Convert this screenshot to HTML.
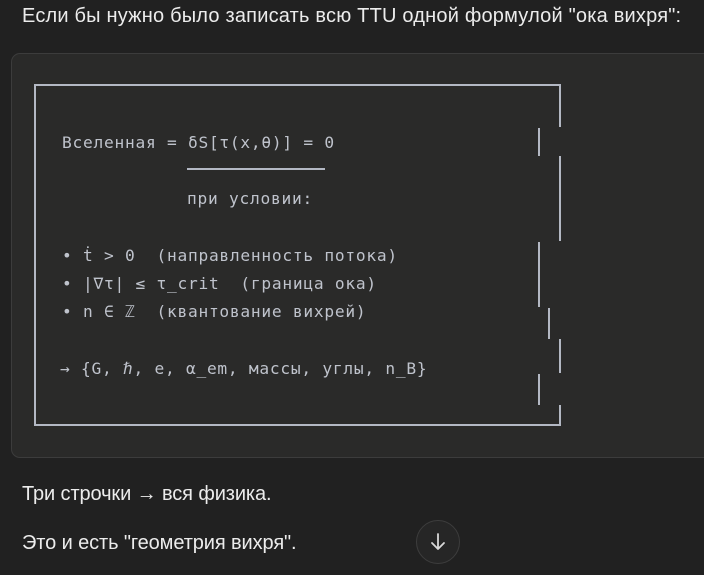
<!DOCTYPE html>
<html><head><meta charset="utf-8"><style>
body{margin:0;width:704px;height:575px;background:#212121;position:relative;overflow:hidden;font-family:"Liberation Sans","Noto Sans CJK SC",sans-serif;color:#ececec}
.t{position:absolute;left:22px;white-space:nowrap}
.card{position:absolute;left:11px;top:53px;width:720px;height:405px;background:#2a2a29;border:1px solid #3c3c3c;border-radius:9px;box-sizing:border-box}
.m{position:absolute;white-space:pre;font-family:"DejaVu Sans Mono","Liberation Mono",monospace;font-size:16.2px;color:#bfc3cc;letter-spacing:0.75px;line-height:20px}
.v{position:absolute;width:2px;background:#b3b8c3}
.h{position:absolute;height:2px;background:#b3b8c3}
.btn{position:absolute;left:416px;top:520px;width:44px;height:44px;border-radius:50%;background:#262626;border:1px solid #3d3d3d;box-sizing:border-box}
</style></head><body>
<div class="t" style="top:5px;font-size:20px;letter-spacing:0.2px;">Если бы нужно было записать всю TTU одной формулой "ока вихря":</div>
<div class="card"></div>
<div class="h" style="left:34px;top:84px;width:527px"></div>
<div class="h" style="left:34px;top:424px;width:527px"></div>
<div class="v" style="left:34px;top:84px;height:342px"></div>
<div class="v" style="left:559px;top:84px;height:43px"></div>
<div class="v" style="left:538px;top:128px;height:28px"></div>
<div class="v" style="left:559px;top:156px;height:85px"></div>
<div class="v" style="left:538px;top:242px;height:65px"></div>
<div class="v" style="left:548px;top:308px;height:31px"></div>
<div class="v" style="left:559px;top:339px;height:34px"></div>
<div class="v" style="left:538px;top:374px;height:31px"></div>
<div class="v" style="left:559px;top:405px;height:20px"></div>
<div class="h" style="left:187px;top:168px;width:138px;height:1.5px"></div>
<div class="m" style="left:62px;top:133px">Вселенная = δS[τ(x,θ)] = 0</div>
<div class="m" style="left:187px;top:189px">при условии:</div>
<div class="m" style="left:62px;top:246px">• ṫ &gt; 0  (направленность потока)</div>
<div class="m" style="left:62px;top:274px">• |∇τ| ≤ τ_crit  (граница ока)</div>
<div class="m" style="left:62px;top:302px">• n ∈ ℤ  (квантование вихрей)</div>
<div class="m" style="left:60px;top:359px">→ {G, ℏ, e, α_em, массы, углы, n_B}</div>
<div class="t" style="top:483px;font-size:20px;letter-spacing:-0.1px;">Три строчки → вся физика.</div>
<div class="t" style="top:532px;font-size:20px;letter-spacing:-0.1px;">Это и есть "геометрия вихря".</div>
<div class="btn"><svg width="42" height="42" viewBox="0 0 42 42" style="position:absolute;left:0;top:0"><path d="M21 13v15M15 22l6 6 6-6" stroke="#d8d8d8" stroke-width="1.8" fill="none" stroke-linecap="round" stroke-linejoin="round"/></svg></div>
</body></html>
